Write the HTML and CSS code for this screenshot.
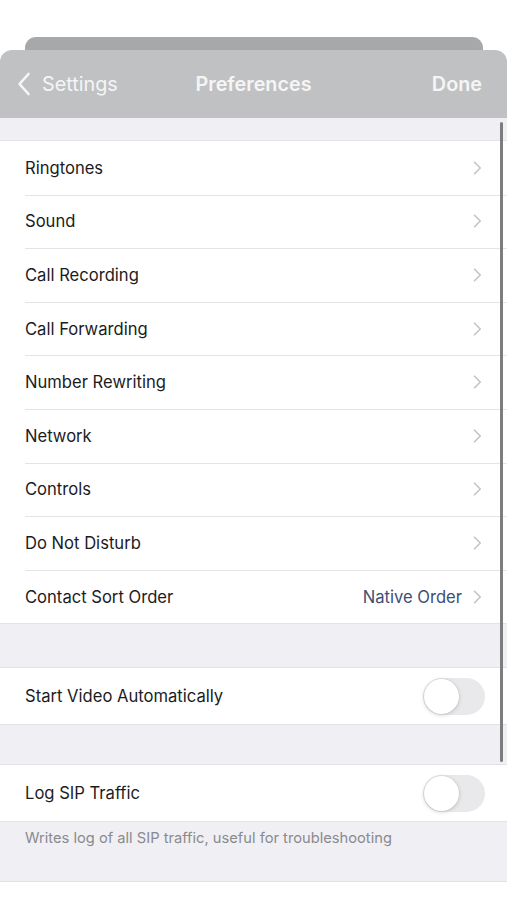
FILE: index.html
```html
<!DOCTYPE html>
<html lang="en">
<head>
<meta charset="utf-8">
<title>Preferences</title>
<link rel="stylesheet" href="styles.css">
</head>
<body>
<div class="screen">
  <div class="back-card"></div>
  <div class="sheet">
    <header class="navbar">
      <div class="nav-left">
        <svg class="back-chev" width="14" height="24" viewBox="0 0 14 24"><path d="M11.5 2 L2.5 12 L11.5 22" fill="none" stroke="currentColor" stroke-width="2.6" stroke-linecap="round" stroke-linejoin="round"/></svg>
        <span>Settings</span>
      </div>
      <div class="nav-title">Preferences</div>
      <div class="nav-right">Done</div>
    </header>
    <div class="content">
      <div class="spacer top"></div>
      <ul class="group">
        <li class="row"><span class="label">Ringtones</span><svg class="chev" width="9" height="14" viewBox="0 0 9 14"><path d="M1.5 1.2 L7.3 7 L1.5 12.8" fill="none" stroke="currentColor" stroke-width="1.6" stroke-linecap="round" stroke-linejoin="round"/></svg></li>
        <li class="row"><span class="label">Sound</span><svg class="chev" width="9" height="14" viewBox="0 0 9 14"><path d="M1.5 1.2 L7.3 7 L1.5 12.8" fill="none" stroke="currentColor" stroke-width="1.6" stroke-linecap="round" stroke-linejoin="round"/></svg></li>
        <li class="row"><span class="label">Call Recording</span><svg class="chev" width="9" height="14" viewBox="0 0 9 14"><path d="M1.5 1.2 L7.3 7 L1.5 12.8" fill="none" stroke="currentColor" stroke-width="1.6" stroke-linecap="round" stroke-linejoin="round"/></svg></li>
        <li class="row"><span class="label">Call Forwarding</span><svg class="chev" width="9" height="14" viewBox="0 0 9 14"><path d="M1.5 1.2 L7.3 7 L1.5 12.8" fill="none" stroke="currentColor" stroke-width="1.6" stroke-linecap="round" stroke-linejoin="round"/></svg></li>
        <li class="row"><span class="label">Number Rewriting</span><svg class="chev" width="9" height="14" viewBox="0 0 9 14"><path d="M1.5 1.2 L7.3 7 L1.5 12.8" fill="none" stroke="currentColor" stroke-width="1.6" stroke-linecap="round" stroke-linejoin="round"/></svg></li>
        <li class="row"><span class="label">Network</span><svg class="chev" width="9" height="14" viewBox="0 0 9 14"><path d="M1.5 1.2 L7.3 7 L1.5 12.8" fill="none" stroke="currentColor" stroke-width="1.6" stroke-linecap="round" stroke-linejoin="round"/></svg></li>
        <li class="row"><span class="label">Controls</span><svg class="chev" width="9" height="14" viewBox="0 0 9 14"><path d="M1.5 1.2 L7.3 7 L1.5 12.8" fill="none" stroke="currentColor" stroke-width="1.6" stroke-linecap="round" stroke-linejoin="round"/></svg></li>
        <li class="row"><span class="label">Do Not Disturb</span><svg class="chev" width="9" height="14" viewBox="0 0 9 14"><path d="M1.5 1.2 L7.3 7 L1.5 12.8" fill="none" stroke="currentColor" stroke-width="1.6" stroke-linecap="round" stroke-linejoin="round"/></svg></li>
        <li class="row"><span class="label">Contact Sort Order</span><span class="value">Native Order</span><svg class="chev" width="9" height="14" viewBox="0 0 9 14"><path d="M1.5 1.2 L7.3 7 L1.5 12.8" fill="none" stroke="currentColor" stroke-width="1.6" stroke-linecap="round" stroke-linejoin="round"/></svg></li>
      </ul>
      <div class="spacer gap1"></div>
      <ul class="group">
        <li class="row tall"><span class="label">Start Video Automatically</span><span class="toggle"><span class="knob"></span></span></li>
      </ul>
      <div class="spacer gap2"></div>
      <ul class="group">
        <li class="row tall"><span class="label">Log SIP Traffic</span><span class="toggle"><span class="knob"></span></span></li>
      </ul>
      <div class="footer-note">Writes log of all SIP traffic, useful for troubleshooting</div>
      <div class="scrollbar"></div>
    </div>
  </div>
</div>
</body>
</html>
```

FILE: styles.css
```css
* { box-sizing: border-box; }
html, body {
  margin: 0;
  padding: 0;
  background: #ffffff;
}
body {
  font-family: "Inter", "Roboto", "Liberation Sans", sans-serif;
  color: #1c1c1e;
}
.screen {
  width: 507px;
  height: 900px;
  padding-top: 37px;
  position: relative;
  overflow: hidden;
}
.back-card {
  height: 13px;
  margin: 0 24px 0 25px;
  background: #a7a8aa;
  border-radius: 11px 11px 0 0;
}
.sheet {
  background: #ffffff;
  border-radius: 12px 12px 0 0;
  overflow: hidden;
}
.navbar {
  height: 68px;
  background: #c0c1c3;
  display: flex;
  align-items: center;
  justify-content: space-between;
  padding: 0 25px 0 17px;
  color: #f5f5f6;
  font-size: 19.8px;
  position: relative;
}
.nav-left {
  display: flex;
  align-items: center;
  gap: 11px;
}
.back-chev { display: block; color: #f7f7f8; }
.nav-title {
  position: absolute;
  left: 0;
  right: 0;
  text-align: center;
  font-weight: 600;
  pointer-events: none;
}
.nav-right { font-weight: 600; }
.content {
  background: #f0f0f4;
  position: relative;
}
.spacer.top { height: 22px; }
.spacer.gap1 { height: 43px; }
.spacer.gap2 { height: 39px; }
.group {
  list-style: none;
  margin: 0;
  padding: 0;
  background: #ffffff;
  border-top: 1px solid #e2e2e6;
  border-bottom: 1px solid #e2e2e6;
}
.row {
  height: 53.6px;
  display: flex;
  align-items: center;
  padding: 0 25px 0 25px;
  font-size: 16.6px;
  position: relative;
}
.row + .row::before {
  content: "";
  position: absolute;
  top: 0;
  left: 25px;
  right: 0;
  border-top: 1px solid #e4e4e8;
}
.row.tall { height: 56px; }
.label { flex: 1; }
.value {
  color: #3d4f74;
  margin-right: 11px;
}
.chev {
  display: block;
  color: #c4c4c7;
}
.toggle {
  width: 62px;
  height: 37px;
  border-radius: 19px;
  background: #e9e9eb;
  position: relative;
  margin-right: -3px;
}
.knob {
  position: absolute;
  left: 1px;
  top: 1px;
  width: 35px;
  height: 35px;
  border-radius: 50%;
  background: #ffffff;
  box-shadow: 0 1px 4px rgba(0,0,0,0.18), 0 0 0 0.5px rgba(0,0,0,0.06);
}
.footer-note {
  height: 60px;
  padding: 7px 25px 0;
  font-size: 14.7px;
  color: #8a8a8e;
  border-bottom: 1px solid #e2e2e6;
}
.scrollbar {
  position: absolute;
  top: 4px;
  right: 4px;
  width: 3px;
  height: 640px;
  border-radius: 2px;
  background: #7d7d80;
}
```
